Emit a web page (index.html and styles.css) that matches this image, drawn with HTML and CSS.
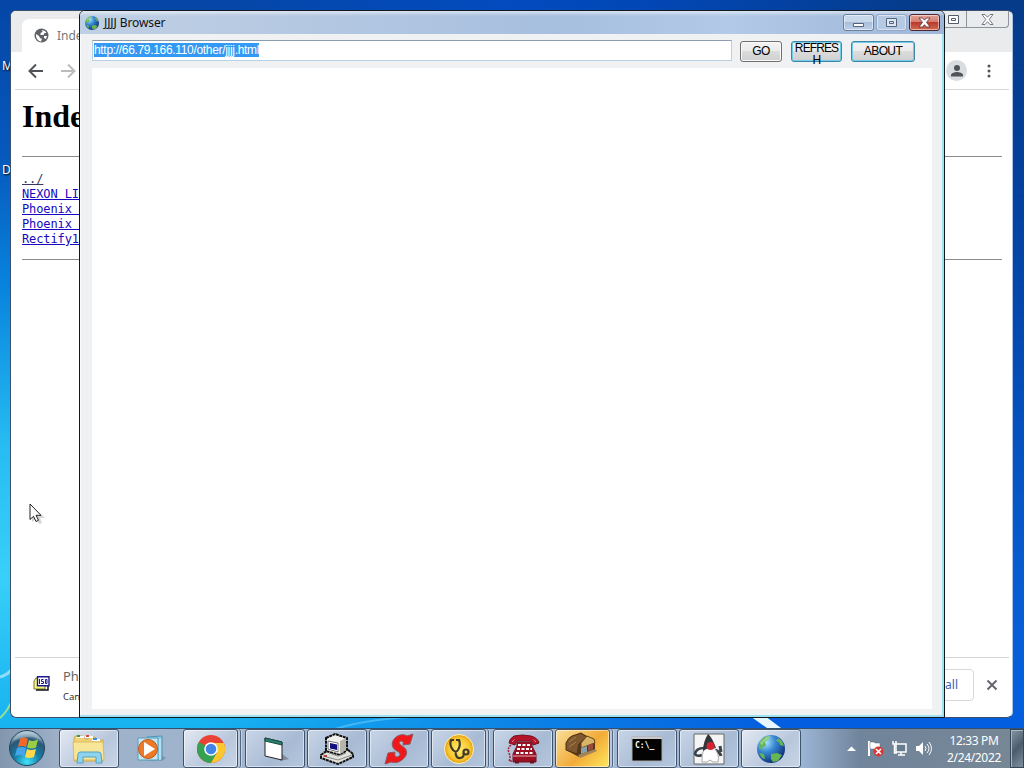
FILE: index.html
```html
<!DOCTYPE html>
<html lang="en">
<head>
<meta charset="UTF-8">
<title>JJJJ Browser</title>
<link rel="stylesheet" href="styles.css">
</head>
<body>
<div class="desktop">
    <svg class="wallpaper" viewBox="0 0 1024 768">
        <path d="M0 677Q8 675 14 667" stroke="#b8ecff" stroke-width="3" fill="none" opacity=".7"/>
        <path d="M0 718Q8 711 13 698" stroke="#b5ef7a" stroke-width="2" fill="none" opacity=".8"/>
        <path d="M335 729Q370 718 430 716" stroke="#74d4ff" stroke-width="2" fill="none" opacity=".5"/>
        <path d="M750 716h15l16 12h-14z" fill="#e8f6ff"/>
    </svg>
    <span class="label label-m">M</span>
    <span class="label label-d">D</span>

    <!-- back window -->
    <div class="chrome">
        <div class="tabs">
            <div class="tab">
                <svg width="15" height="15" viewBox="0 0 15 15"><circle cx="7.5" cy="7.5" r="7" fill="#5f6368"/><path d="M2 6l3 2 1 2 2 1-1 2.500C4 13 1.500 10 2 6zM8 2l3 1 1.500 2-2 0-1 2-3 0 0-2 2-1zM10 8h3l-1 3-2-1z" fill="#fff"/></svg>
                <span>Index of /</span>
            </div>
            <div class="winbtns">
                <div class="wb wb-max"><svg width="13" height="11" viewBox="0 0 13 11"><path d="M1.500 1.500h10v8h-10zM4.500 4.500h4v2h-4z" fill="#fff" stroke="#555d6a"/></svg></div>
                <div class="wb wb-close"><svg width="13" height="11" viewBox="0 0 13 11"><path d="M1 .5h3l2.500 2.700L9 .5h3L8.200 5.500l3.800 5H9L6.500 7.700 4 10.500H1l3.800-5z" fill="#fff" stroke="#555d6a" stroke-width=".8"/></svg></div>
            </div>
        </div>
        <div class="toolbar">
            <svg width="16" height="16" viewBox="0 0 16 16"><path d="M15 8H2M8 1.500L1.500 8 8 14.500" fill="none" stroke="#505357" stroke-width="2"/></svg>
            <svg class="fwd" width="16" height="16" viewBox="0 0 16 16"><path d="M1 8h13M8 1.500L14.500 8 8 14.500" fill="none" stroke="#babcbe" stroke-width="2"/></svg>
            <div class="avatar"><svg width="14" height="14" viewBox="0 0 14 14"><circle cx="7" cy="4" r="3" fill="#505357"/><path d="M1 12.500V11c0-2 4-3 6-3s6 1 6 3v1.500z" fill="#505357"/></svg></div>
            <svg class="dots" width="4" height="14" viewBox="0 0 4 14"><circle cx="2" cy="2" r="1.500"/><circle cx="2" cy="7" r="1.500"/><circle cx="2" cy="12" r="1.500"/></svg>
        </div>
        <div class="page">
            <h1>Index of /</h1>
            <hr>
<pre><a class="up">../</a>
<a>NEXON LI</a>
<a>Phoenix </a>
<a>Phoenix </a>
<a>Rectify1</a></pre>
            <hr>
        </div>
        <div class="downloads">
            <svg width="17" height="15" viewBox="0 0 17 15"><path d="M3 2h9v11H1V5z" fill="#f5f57a" stroke="#77772c"/><path d="M3 14h12V9" fill="none" stroke="#111" stroke-width="1.500"/><path d="M4.500.7h11.500v9H4.500z" fill="#fff" stroke="#1d1790" stroke-width="1.400"/><path d="M6.500 3v5M10.500 3.500h-2v2h2v2h-2.500M12.500 3.500h1.500v4h-1.500z" fill="none" stroke="#1d1790"/></svg>
            <div class="file"><p>Phoenix</p><small>Cancelled</small></div>
            <div class="showall">Show all</div>
            <svg width="12" height="12" viewBox="0 0 12 12"><path d="M1.500 1.500l9 9M10.500 1.500l-9 9" stroke="#5f6368" stroke-width="1.800"/></svg>
        </div>
    </div>

    <!-- front window -->
    <div class="browser">
        <div class="title">
            <svg width="16" height="16" viewBox="0 0 32 32"><use href="#globe"/></svg>
            <span>JJJJ Browser</span>
            <div class="controls">
                <div class="ctl ctl-min"><svg width="13" height="11" viewBox="0 0 13 11"><path d="M1.500 6.500h10v3h-10z" fill="#fff" stroke="#566379"/></svg></div>
                <div class="ctl ctl-max"><svg width="13" height="11" viewBox="0 0 13 11"><path d="M1.500 1.500h10v8h-10zM4.500 4.500h4v2h-4z" fill="#dce7f4" stroke="#566379"/></svg></div>
                <div class="ctl ctl-close"><svg width="13" height="11" viewBox="0 0 13 11"><path d="M1 1h3.500l2 2.200L8.500 1H12L8.500 5.300 12 10H8.500l-2-2.300-2 2.300H1l3.500-4.700z" fill="#fff" stroke="#59303a" stroke-width=".8"/></svg></div>
            </div>
        </div>
        <div class="nav">
            <div class="url"><span>http://66.79.166.110/other/jjjj.html</span></div>
            <button class="go">GO</button>
            <button class="refresh">REFRES<br>H</button>
            <button class="about">ABOUT</button>
        </div>
        <div class="view"></div>
    </div>

    <svg class="cursor" width="18" height="22" viewBox="0 0 18 22"><path d="M3 3v16l4-3 3 5 3-1-2-5h5z" fill="#999" opacity=".4"/><path d="M1 1v15.500l3.500-3.200 2.500 5.200 2.500-1.200-2.500-5h5z" fill="#fff" stroke="#222"/></svg>

    <div class="taskbar">
        <div class="start">
            <svg width="38" height="38" viewBox="0 0 38 38">
                <defs><radialGradient id="orb" cx=".5" cy=".9" r=".9"><stop offset="0" stop-color="#42e3fa"/><stop offset=".4" stop-color="#157fa9"/><stop offset=".72" stop-color="#285775"/><stop offset="1" stop-color="#c1d6e4"/></radialGradient></defs>
                <circle cx="19" cy="19" r="17.500" fill="url(#orb)" stroke="#23465e"/>
                <path d="M12 10q4-3 8 0l-2 8q-4-2-8 0z" fill="#f2682a"/><path d="M21 11q4 2 9-.5l-2 8q-5 2-9 0z" fill="#99cd43"/>
                <path d="M9 19q4-2 9 0l-2 8q-4-2-9 0z" fill="#45a5ea"/><path d="M19 20q4 2 9 0l-2 8q-5 2-9 0z" fill="#ffd84b"/>
                <path d="M4 12Q10 3 19 3t15 9q-8-5-15-4T4 12z" fill="#fff" opacity=".25"/>
            </svg>
        </div>
        <div class="apps">
            <div class="task lit"><svg width="34" height="32" viewBox="0 0 34 32"><path d="M2 6l1-3h8l2 3h3l1-2h6l2 3h6v21H2z" fill="#efd275" stroke="#c9aa55"/><path d="M5 4h7M13 4h8M20 7h8" stroke="#fff" stroke-width="2"/><path d="M5 3h3" stroke="#29a345" stroke-width="2"/><path d="M14 3h3" stroke="#d34d31" stroke-width="2"/><path d="M21 6h4" stroke="#398ddc" stroke-width="2"/><path d="M1 9h30l1 18H2z" fill="#f8e698" stroke="#ddbc60"/><path d="M5 30l1-9q0-2 3-2h17q3 0 3 2l1 9h-6v-6H11v6z" fill="#8fd4ee" stroke="#559fbe"/></svg></div>
            <div class="task plain"><svg width="32" height="30" viewBox="0 0 32 30"><path d="M26 27l5-3-4-2z" fill="#557" opacity=".4"/><path d="M12 3l15-1v24H12z" fill="#91cce6" stroke="#4d96b8"/><path d="M8 4h15v22H3V4z" fill="#c5e6f2" stroke="#579cba"/><circle cx="13" cy="15" r="9.500" fill="#ed7928" stroke="#bd5a1d"/><path d="M9 8l11 7-11 7z" fill="#fff"/><path d="M25 5v21" stroke="#dff4fd"/></svg></div>
            <div class="task stack lit"><svg width="30" height="30" viewBox="0 0 30 30"><circle cx="15" cy="15" r="14" fill="#e94335"/><path d="M2.900 8A14 14 0 0015 29l6-10.500L15 15z" fill="#34a250"/><path d="M27.800 9H15l6 9.500L15 29A14 14 0 0027.800 9z" fill="#fbc72f"/><circle cx="15" cy="15" r="6.800" fill="#fff"/><circle cx="15" cy="15" r="5.300" fill="#4285e8"/></svg></div>
            <div class="task"><svg width="30" height="30" viewBox="0 0 30 30"><path d="M22 20l7 5-9 2z" fill="#667" opacity=".6"/><path d="M5 4l17 4v18L5 22z" fill="#fff" stroke="#222"/><path d="M5 4l17 4v3L5 7z" fill="#27816e" stroke="#184b40"/></svg></div>
            <div class="task"><svg width="34" height="32" viewBox="0 0 34 32"><path d="M1 22l7-5 19-1 6 5v3L18 31 1 25z" fill="#e2e2dc" stroke="#111" stroke-width="2" stroke-dasharray="3 .6"/><path d="M6 5l9-4 12 4v12l-7 5-14-4z" fill="#f1f1ed" stroke="#111" stroke-width="2" stroke-dasharray="3 .6"/><path d="M20 8l6-3v12l-6 4z" fill="#b5b5b0"/><path d="M8 8l10 2v9L8 16z" fill="#fff" stroke="#777"/><path d="M10 10l7 1.500V17l-7-1.500z" fill="#101080"/><path d="M3 23l15 4 14-5M9 20l9 3 8-3" fill="none" stroke="#888"/><path d="M4 23h3" stroke="#b54040" stroke-width="2"/></svg></div>
            <div class="task"><svg width="32" height="32" viewBox="0 0 32 32"><path d="M30 1l-3 10-7 1q1-4-1-4c-4 0-3 3 0 5 6 3 6 9 1 13-4 4-8 4-12 3l-6 2 3-11 7-1q-1 5 2 5c4-1 4-4 0-6-6-3-6-9-2-13 4-4 9-4 12-2z" fill="#f01818" stroke="#8d5961"/></svg></div>
            <div class="task stack"><svg width="32" height="32" viewBox="0 0 32 32"><defs><radialGradient id="gold"><stop stop-color="#fff071"/><stop offset=".75" stop-color="#f7c62f"/><stop offset="1" stop-color="#e59a13"/></radialGradient></defs><circle cx="16" cy="16" r="14.500" fill="url(#gold)" stroke="#fff2b0"/><path d="M11 7H8q-2 5 2 10 3 3 5 0 3-5 1-10h-3M12.500 18q0 8 5 7 4-1 3-5" fill="none" stroke="#423a2b" stroke-width="2.200"/><circle cx="23" cy="19" r="2.500" fill="none" stroke="#423a2b" stroke-width="2.200"/></svg></div>
            <div class="task"><svg width="34" height="32" viewBox="0 0 34 32"><path d="M5 12q-4 3-2 8t0 8h3" stroke="#a22031" fill="none" stroke-width="1.500" stroke-dasharray="2 1"/><path d="M3 10q0-4 5-7 8-2 17 0 7 2 8 7l-6 2-2-4H11l-2 4z" fill="#b51329" stroke="#6f1722"/><path d="M6 9l3-3M30 9l-3-3" stroke="#f1c9cd" stroke-dasharray="1 1"/><path d="M11 9h14l1 4 4 8v8H7v-8l4-8z" fill="#9c1024" stroke="#701522"/><path d="M12 12h12M11 16h15M10 20h17" stroke="#fff" stroke-width="2" stroke-dasharray="3 1.500"/><path d="M7 23h23" stroke="#e9abb2"/><path d="M9 29h4M24 29h4" stroke="#6c1520" stroke-width="3"/></svg></div>
            <div class="task stack hot"><svg class="house" width="34" height="32" viewBox="0 0 34 32"><path d="M2 13l4-6 11-4 14 7v10l-16 7L2 20z" fill="#56381c"/><path d="M2 13q2-5 6-7l9-3 6 4-8 7-2 10L2 20z" fill="#7e572f" stroke="#4d3117"/><path d="M17 13l6-7 7 3 1 4-14 5z" fill="#d9b466" stroke="#68451d"/><path d="M17 18l6-2v6l-6 2z" fill="#89a0ac"/><path d="M24 15l5-2v6l-5 2z" fill="#984d3d"/><path d="M14 25l17-6 2 2-17 7z" fill="#a18557"/><path d="M5 12l7-5M5 17l7-5" stroke="#a7834d"/></svg></div>
            <div class="task"><svg width="32" height="28" viewBox="0 0 32 28"><path d="M1 2h30v24H1z" fill="#030303" stroke="#aaa"/><path d="M1 3h30" stroke="#c8c8c8" stroke-width="2"/><text x="4" y="13" class="cmd">C:\_</text></svg></div>
            <div class="task"><svg width="32" height="32" viewBox="0 0 32 32"><path d="M1 1h30v30H1z" fill="#f4f4f4" stroke="#666"/><path d="M11 15q-8 0-9 6 2 3 7 1" fill="none" stroke="#38434c" stroke-width="2.500"/><path d="M22 17q5 2 6 6M27 13l1 6" fill="none" stroke="#38434c" stroke-width="3"/><path d="M12 14q-4 7-3 15h5l3-2 3 2h5q2-8-4-14z" fill="#fff" stroke="#aaa"/><path d="M15 1q4 3 8 14-6-2-13 3 0-9 5-17z" fill="#30353a"/><circle cx="17.500" cy="13" r="4" fill="#d7232f"/></svg></div>
            <div class="task lit"><svg width="32" height="32" viewBox="0 0 32 32"><defs><radialGradient id="sea" cx=".3" cy=".25" r=".8"><stop stop-color="#b3e8ff"/><stop offset=".45" stop-color="#3688d4"/><stop offset="1" stop-color="#102e77"/></radialGradient></defs><g id="globe"><circle cx="16" cy="16" r="14" fill="url(#sea)"/><path d="M4 10l5-6 6-1-2 4-3 2 1 4-4 1 1 3-4-2zM23 5l4 3 2 5-4-1-1-3-3-1zM16 21l6-1 5 2-4 6-5 1-2-3zM4 20l5 1 1 5-3-1z" fill="#65b653"/><path d="M5 10l6-6 5-1-3 4-4 2-2 3z" fill="#b4e4b4" opacity=".6"/></g></svg></div>
        </div>
        <div class="tray">
            <svg class="up-arrow" width="9" height="5" viewBox="0 0 9 5"><path d="M0 5l4.500-4.500L9 5z" fill="#fff"/></svg>
            <svg width="17" height="17" viewBox="0 0 17 17"><path d="M2 1v15" stroke="#fff" stroke-width="2"/><path d="M3 2h4l1 1h5v7H8L7 9H3z" fill="#fff" stroke="#566b7c" stroke-width=".5"/><circle cx="11.500" cy="11.500" r="5" fill="#d83835"/><path d="M9 9l5 5M14 9l-5 5" stroke="#fff" stroke-width="1.600"/></svg>
            <svg width="17" height="17" viewBox="0 0 17 17"><path d="M5 4h10v8H5z" fill="#667b8d" stroke="#fff" stroke-width="1.500"/><path d="M10 12v3M7 15h7M2 1v3h3V1M3.500 4v9H6" fill="none" stroke="#fff" stroke-width="1.500"/></svg>
            <svg width="17" height="15" viewBox="0 0 17 15"><path d="M1 5h3l4-4v13L4 10H1z" fill="#fff"/><path d="M10 5q2 2.500 0 5M12 3q4 4.500 0 9M14 1q5 6.500 0 13" fill="none" stroke="#fff"/></svg>
            <div class="clock">12:33 PM<br>2/24/2022</div>
        </div>
        <div class="peek"></div>
    </div>
</div>
</body>
</html>
```
FILE: styles.css
```css
*{
    box-sizing: border-box;
}
body{
    margin: 0;
    font-family: "Noto Sans", sans-serif;
}
svg{
    display: block;
    flex: none;
}
.desktop{
    position: relative;
    width: 1024px;
    height: 768px;
    overflow: hidden;
    background: linear-gradient(90deg, rgba(0,60,150,0) 20%, rgba(0,80,220,.85) 75%), linear-gradient(#0546a6, #0758bd 20%, #0783dd 37%, #27bcf2 58%, #38cff8 75%, #16b1f0 95%);
}
.desktop:before{
    content: "";
    position: absolute;
    right: 0;
    width: 50%;
    height: 100%;
    background: linear-gradient(90deg, transparent, #053b88 80%);
    -webkit-mask-image: linear-gradient(#000, transparent 90%);
    mask-image: linear-gradient(#000, transparent 90%);
}
.wallpaper{
    position: absolute;
    left: 0;
    top: 0;
}
.label{
    position: absolute;
    left: 2px;
    color: #fff;
    font-size: 12px;
    line-height: 16px;
    text-shadow: 1px 1px 2px #000;
}
.label-m{
    top: 58px;
}
.label-d{
    top: 162px;
}

/* chrome window */
.chrome{
    position: absolute;
    left: 10px;
    top: 10px;
    width: 1003px;
    height: 708px;
    display: flex;
    flex-direction: column;
    background: #fff;
    border: 1px solid #39506d;
    border-color: #39506d #a8c3e3 #39506d #39506d;
    border-radius: 6px;
    overflow: hidden;
}
.tabs{
    height: 41px;
    flex: none;
    display: flex;
    background: #e9ebed;
}
.tab{
    width: 240px;
    height: 33px;
    margin: 8px 0 0 11px;
    padding: 0 0 0 12px;
    display: flex;
    align-items: center;
    gap: 8px;
    background: #fff;
    border-radius: 7px 7px 0 0;
    font-size: 12px;
    color: #777;
}
.winbtns{
    display: flex;
    height: 17px;
    margin-left: auto;
    margin-right: 3px;
    border: 1px solid #8e949c;
    border-top: 0;
    border-radius: 0 0 4px 4px;
}
.wb{
    display: flex;
    align-items: center;
    justify-content: center;
}
.wb-max{
    width: 26px;
    border-right: 1px solid #8e949c;
}
.wb-close{
    width: 41px;
}
.toolbar{
    height: 38px;
    flex: none;
    display: flex;
    align-items: center;
    margin: 0 3px 0 4px;
    padding: 0 18px 0 13px;
    border-bottom: 1px solid #d5d7da;
}
.fwd{
    margin-left: 16px;
}
.avatar{
    width: 21px;
    height: 21px;
    margin-left: auto;
    display: flex;
    align-items: center;
    justify-content: center;
    background: #dadde0;
    border-radius: 50%;
}
.dots{
    margin-left: 20px;
    fill: #505357;
}
.page{
    flex: 1;
    padding: 7px 10px 0 11px;
}
.page h1{
    margin: 0 0 21px;
    font: bold 32px/38px "Liberation Serif", serif;
}
.page hr{
    height: 1px;
    margin: 0;
    border: 0;
    background: #8b8b8b;
}
.page pre{
    margin: 15px 0 12px;
    font: 12px/15px "DejaVu Sans Mono", monospace;
    letter-spacing: -.1px;
}
.page a{
    color: #1508c0;
    text-decoration: underline;
}
.page .up{
    color: #3b3560;
}
.downloads{
    height: 60px;
    flex: none;
    display: flex;
    align-items: center;
    margin: 0 3px 0 4px;
    padding: 0 11px 5px 18px;
    border-top: 1px solid #d2d4d6;
}
.downloads > svg:first-child{
    margin-bottom: 3px;
}
.file{
    margin: 2px 0 0 13px;
    color: #666;
}
.file p{
    margin: 0;
    font-size: 13px;
    line-height: 20px;
}
.file small{
    display: block;
    margin-top: 1px;
    font-size: 9.5px;
    line-height: 19px;
    color: #333;
}
.showall{
    height: 32px;
    margin: 0 12px 0 auto;
    padding: 0 15px;
    border: 1px solid #d5d8dc;
    border-radius: 4px;
    font-size: 12px;
    line-height: 30px;
    color: #3d62b5;
}

/* jjjj window */
.browser{
    position: absolute;
    left: 79px;
    top: 10px;
    width: 866px;
    height: 708px;
    display: flex;
    flex-direction: column;
    background: #f0f1f2;
    border: 1px solid #101820;
    border-radius: 6px 6px 0 0;
    box-shadow: inset -2px -2px 0 #9fe1ef, inset 1px 0 0 #f9fafb;
    overflow: hidden;
}
.title{
    height: 23px;
    flex: none;
    display: flex;
    align-items: center;
    gap: 4px;
    padding: 0 4px;
    background: linear-gradient(rgba(255,255,255,.55), transparent 5px, transparent), linear-gradient(90deg, #c0d0e4, #a7bfdf 55%, #b2c9e7 75%, #9eb6d8);
    font-size: 12px;
    letter-spacing: -.1px;
    color: #111;
}
.controls{
    margin-left: auto;
    display: flex;
    gap: 2px;
}
.ctl{
    height: 17px;
    width: 31px;
    display: flex;
    align-items: center;
    justify-content: center;
    border: 1px solid #6c7f9b;
    border-radius: 3px;
    box-shadow: inset 0 0 0 1px rgba(255,255,255,.5);
    background: linear-gradient(#c9d9ec 50%, #a8bedb 50%, #bdd0e8);
}
.ctl-max{
    border-color: #92a7c5;
    background: #b5c9e3;
}
.ctl-close{
    border-color: #4e2630;
    background: linear-gradient(#e3a196, #d67b6e 48%, #b83b2d 50%, #d16a51);
}
.nav{
    height: 34px;
    flex: none;
    display: flex;
    align-items: flex-start;
    padding: 6px 0 0 12px;
}
.url{
    width: 640px;
    height: 21px;
    padding: 2px 1px;
    background: #fff;
    border: 1px solid #b9d1e5;
    border-top-color: #8a9cad;
    font: 12px/14px "Liberation Sans", sans-serif;
    letter-spacing: -.32px;
}
.url span{
    display: inline-block;
    height: 14px;
    background: #3399f3;
    color: #fff;
}
.nav button{
    height: 21px;
    margin-top: 1px;
    padding: 0;
    border: 1px solid #707070;
    border-radius: 3px;
    background: linear-gradient(#f3f3f3, #ebebeb 50%, #dcdcdc 50%, #cfcfcf);
    box-shadow: inset 0 0 0 1px #fafafa;
    font: 12px/13px "Liberation Sans", sans-serif;
    letter-spacing: -.6px;
    color: #000;
}
.nav .go{
    width: 42px;
    margin-left: 8px;
}
.nav .refresh{
    width: 51px;
    margin-left: 9px;
    padding-bottom: 3px;
    border-color: #4086a5;
    box-shadow: inset 0 0 0 1px #71cbea;
    line-height: 12px;
    letter-spacing: -.9px;
}
.nav .about{
    width: 64px;
    margin-left: 9px;
    border-color: #4086a5;
    box-shadow: inset 0 0 0 1px #71cbea;
}
.view{
    flex: 1;
    margin: 0 12px 8px 12px;
    background: #fff;
}
.cursor{
    position: absolute;
    left: 29px;
    top: 503px;
}

/* taskbar */
.taskbar{
    position: absolute;
    left: 0;
    bottom: 0;
    width: 100%;
    height: 40px;
    display: flex;
    background: linear-gradient(90deg, #8296ad, #9eb1c9 60px, #a3b8d3 50%, #9eb7d8 78%, #70849b 84%, #778795);
    border-top: 1px solid #34516f;
}
.start{
    width: 59px;
    flex: none;
    padding: 0 0 0 8px;
}
.apps{
    display: flex;
    gap: 2px;
}
.task{
    width: 60px;
    height: 39px;
    display: flex;
    align-items: center;
    justify-content: center;
    border: 1px solid #3f536b;
    border-radius: 3px;
    box-shadow: inset 0 0 0 1px rgba(255,255,255,.5);
    background: linear-gradient(135deg, #c8d5e7, #a8bbd4 60%, #b5c7dd);
}
.lit{
    background: linear-gradient(135deg, #e3e9f3, #b9c7dc 60%, #c8d5e6);
}
.plain{
    border-color: transparent;
    box-shadow: none;
    background: none;
}
.stack{
    width: 55px;
    margin-right: 5px;
    box-shadow: inset 0 0 0 1px rgba(255,255,255,.5), 2px 0 0 #b9c9dd, 3px 0 0 #52667f, 4px 0 0 #c5d3e4;
}
.hot{
    background: linear-gradient(135deg, #f9e09c, #f2ab38 55%, #ffe85e);
}
.house{
    margin: 0 4px 6px 0;
}
.cmd{
    font: bold 8px "DejaVu Sans Mono", monospace;
    fill: #fff;
}
.tray{
    flex: 1;
    display: flex;
    align-items: center;
    justify-content: flex-end;
    gap: 7px;
    padding-right: 9px;
}
.up-arrow{
    margin-right: 4px;
}
.clock{
    width: 54px;
    margin-left: 8px;
    font-size: 12px;
    line-height: 17px;
    letter-spacing: -.35px;
    text-align: center;
    white-space: nowrap;
    color: #fff;
}
.peek{
    width: 14px;
    flex: none;
    border: 1px solid #354656;
    box-shadow: inset 1px 1px 0 #a9b8c4;
    background: linear-gradient(135deg, #8896a3, #4b5d6c 50%, #7f909f);
}
```
